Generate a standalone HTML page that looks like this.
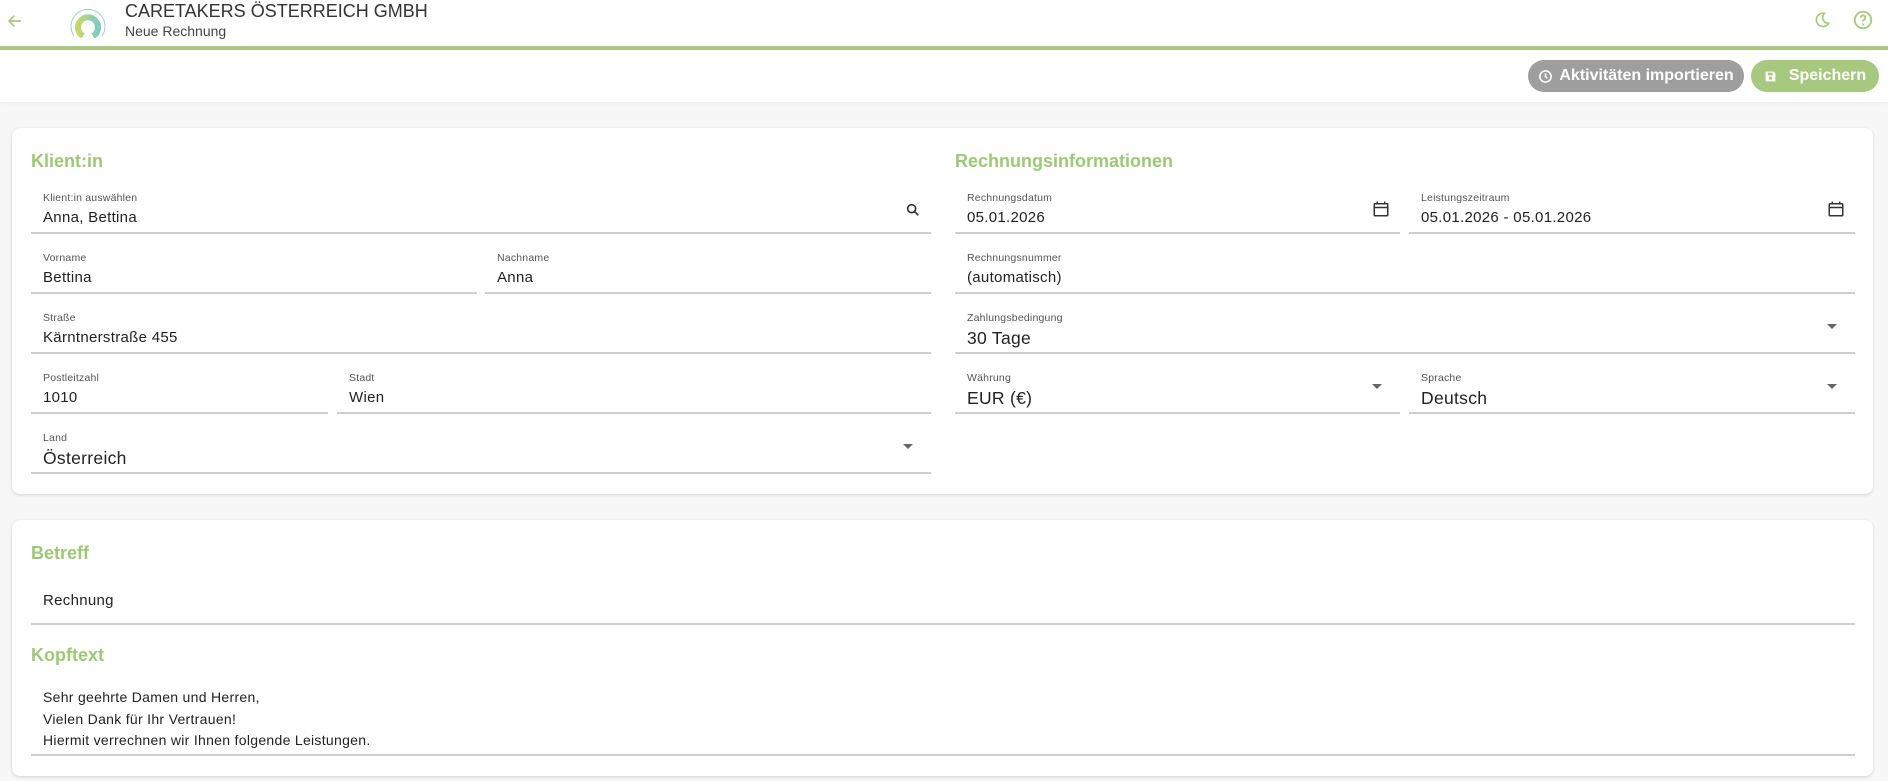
<!DOCTYPE html>
<html><head><meta charset="utf-8"><style>
*{box-sizing:border-box;margin:0;padding:0}
body{width:1888px;height:781px;background:#f7f7f7;font-family:"Liberation Sans",sans-serif;position:relative;overflow:hidden;color:#222}
.hdr{position:absolute;left:0;top:0;width:1888px;height:46px;background:#fff}
.gl{position:absolute;left:0;top:46px;width:1888px;height:4px;background:#a6c97f}
.tb{position:absolute;left:0;top:50px;width:1888px;height:52px;background:#fff;box-shadow:0 1px 3px rgba(0,0,0,.06)}
.btn{position:absolute;top:60px;height:32px;border-radius:16px;color:#fff;font-size:16px;font-weight:bold;display:flex;align-items:center;justify-content:center;gap:6px}
.card{position:absolute;left:12px;width:1861px;background:#fff;border-radius:8px;box-shadow:0 1px 3px rgba(0,0,0,.15)}
.t{position:absolute;color:#9cc877;font-weight:bold;font-size:18px}
.f{position:absolute;height:60px;border-bottom:2px solid #cfcfcf}
.f .l{position:absolute;left:12px;top:18px;font-size:10.5px;color:#555;letter-spacing:.2px}
.f .v{position:absolute;left:12px;top:35px;font-size:15px;color:#222;letter-spacing:.3px}
.f .v.b{font-size:17.5px;top:34px}
.arr{position:absolute;right:18px;top:30px;width:0;height:0;border-left:5px solid transparent;border-right:5px solid transparent;border-top:5px solid #666}
.ic{position:absolute;right:10px;top:26px}
</style></head><body>
<div class="hdr">
<svg style="position:absolute;left:6px;top:12px" width="18" height="18" viewBox="0 0 24 24"><path d="M20 12H5M11 5l-7 7 7 7" stroke="#a6c97f" stroke-width="2.2" fill="none"/></svg>
<svg style="position:absolute;left:66px;top:2px" width="42" height="36" viewBox="0 0 42 36"><path d="M8 34A17 17 0 1 1 36 34" stroke="#9fd0c8" stroke-width="1" fill="none"/><path d="M17 34A10 10 0 1 1 27 34" stroke="url(#g)" stroke-width="6" fill="none"/><defs><linearGradient id="g"><stop offset="0" stop-color="#c5d86a"/><stop offset="1" stop-color="#7ccbc0"/></linearGradient></defs></svg>
<div style="position:absolute;left:125px;top:1px;font-size:18px;color:#333">CARETAKERS ÖSTERREICH GMBH</div>
<div style="position:absolute;left:125px;top:23px;font-size:14px;color:#444">Neue Rechnung</div>
<svg style="position:absolute;left:1812px;top:10px" width="20" height="20" viewBox="0 0 24 24"><path d="M15 4A8 8 0 1 0 20 16A7 7 0 0 1 15 4Z" stroke="#a6c97f" stroke-width="2" fill="none"/></svg>
<svg style="position:absolute;left:1852px;top:9px" width="22" height="22" viewBox="0 0 24 24"><circle cx="12" cy="12" r="9" stroke="#a6c97f" stroke-width="2" fill="none"/><path d="M9.5 9.5a2.5 2.5 0 1 1 3.5 2.3c-.8.4-1 1-1 1.7" stroke="#a6c97f" stroke-width="2" fill="none"/><circle cx="12" cy="16.8" r="1.1" fill="#a6c97f"/></svg>
</div>
<div class="gl"></div>
<div class="tb"></div>
<div class="btn" style="left:1528px;width:216px;background:#9e9e9e"><svg width="15" height="15" viewBox="0 0 24 24"><circle cx="12" cy="12" r="9" stroke="#fff" stroke-width="2.5" fill="none"/><path d="M12 7v5l3 3" stroke="#fff" stroke-width="2.5" fill="none"/></svg>Aktivitäten importieren</div>
<div class="btn" style="left:1751px;width:128px;background:#a6c97f;gap:12px"><svg width="13" height="13" viewBox="0 0 24 24"><path d="M3 3h15l3 3v15H3z" fill="#fff"/><rect x="7" y="5" width="9" height="5" fill="#a6c97f"/><circle cx="12" cy="15" r="3" fill="#a6c97f"/></svg>Speichern</div>

<div class="card" style="top:128px;height:366px"></div>
<div class="t" style="left:31px;top:151px">Klient:in</div>
<div class="t" style="left:955px;top:151px">Rechnungsinformationen</div>

<div class="f" style="left:31px;top:174px;width:900px"><div class="l">Klient:in auswählen</div><div class="v">Anna, Bettina</div><svg class="ic" style="top:28px" width="16" height="16" viewBox="0 0 24 24"><circle cx="10" cy="10" r="6" stroke="#333" stroke-width="2.5" fill="none"/><path d="M14.5 14.5L20 20" stroke="#333" stroke-width="2.5"/></svg></div>
<div class="f" style="left:31px;top:234px;width:446px"><div class="l">Vorname</div><div class="v">Bettina</div></div>
<div class="f" style="left:485px;top:234px;width:446px"><div class="l">Nachname</div><div class="v">Anna</div></div>
<div class="f" style="left:31px;top:294px;width:900px"><div class="l">Straße</div><div class="v">Kärntnerstraße 455</div></div>
<div class="f" style="left:31px;top:354px;width:297px"><div class="l">Postleitzahl</div><div class="v">1010</div></div>
<div class="f" style="left:337px;top:354px;width:594px"><div class="l">Stadt</div><div class="v">Wien</div></div>
<div class="f" style="left:31px;top:414px;width:900px"><div class="l">Land</div><div class="v b">Österreich</div><div class="arr"></div></div>

<div class="f" style="left:955px;top:174px;width:445px"><div class="l">Rechnungsdatum</div><div class="v">05.01.2026</div><svg class="ic" width="18" height="18" viewBox="0 0 24 24"><rect x="3" y="5" width="18" height="16" rx="1" stroke="#333" stroke-width="2" fill="none"/><path d="M3 10h18M7 2v4M17 2v4" stroke="#333" stroke-width="2"/></svg></div>
<div class="f" style="left:1409px;top:174px;width:446px"><div class="l">Leistungszeitraum</div><div class="v">05.01.2026 - 05.01.2026</div><svg class="ic" width="18" height="18" viewBox="0 0 24 24"><rect x="3" y="5" width="18" height="16" rx="1" stroke="#333" stroke-width="2" fill="none"/><path d="M3 10h18M7 2v4M17 2v4" stroke="#333" stroke-width="2"/></svg></div>
<div class="f" style="left:955px;top:234px;width:900px"><div class="l">Rechnungsnummer</div><div class="v">(automatisch)</div></div>
<div class="f" style="left:955px;top:294px;width:900px"><div class="l">Zahlungsbedingung</div><div class="v b">30 Tage</div><div class="arr"></div></div>
<div class="f" style="left:955px;top:354px;width:445px"><div class="l">Währung</div><div class="v b">EUR (€)</div><div class="arr"></div></div>
<div class="f" style="left:1409px;top:354px;width:446px"><div class="l">Sprache</div><div class="v b">Deutsch</div><div class="arr"></div></div>

<div class="card" style="top:520px;height:256px"></div>
<div class="t" style="left:31px;top:543px">Betreff</div>
<div class="f" style="left:31px;top:565px;width:1824px"><div class="v" style="top:27px">Rechnung</div></div>
<div class="t" style="left:31px;top:645px">Kopftext</div>
<div class="f" style="left:31px;top:680px;width:1824px;height:76px"><div class="v" style="top:7px;font-size:14px;line-height:21.5px">Sehr geehrte Damen und Herren,<br>Vielen Dank für Ihr Vertrauen!<br>Hiermit verrechnen wir Ihnen folgende Leistungen.</div></div>
</body></html>
